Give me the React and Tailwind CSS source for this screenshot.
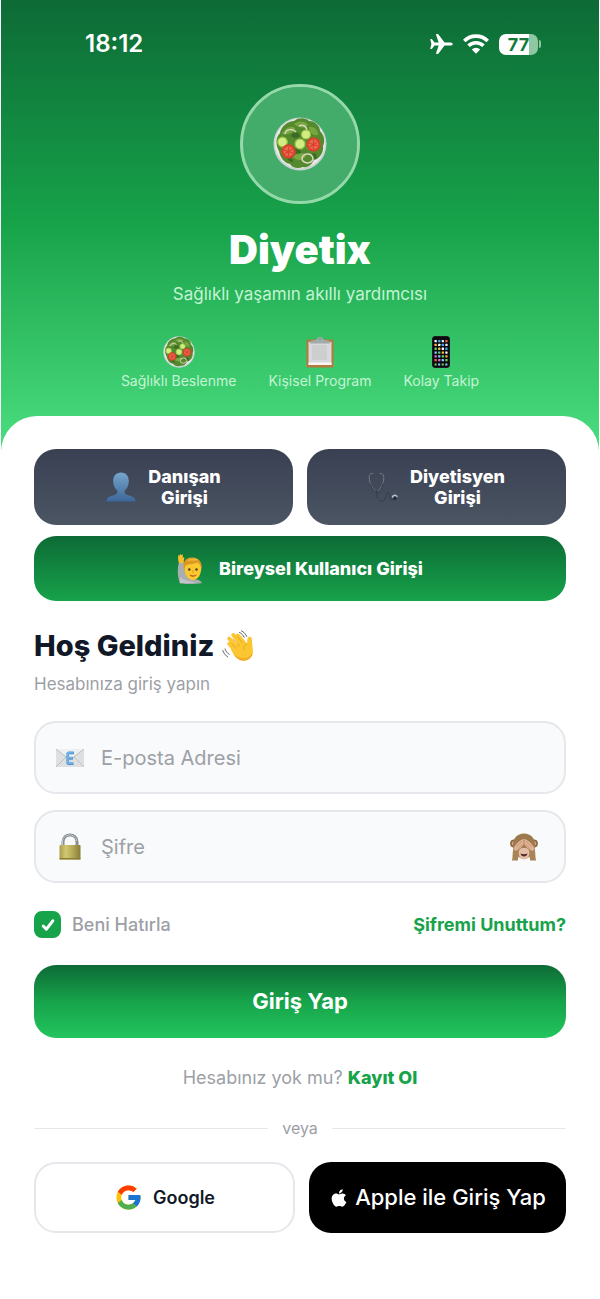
import React, { useState } from 'react';
import { FcGoogle } from 'react-icons/fc';
import { FaApple } from 'react-icons/fa';

const AirplaneIcon = () => (
  <svg viewBox="0 0 23 20" className="w-[23px] h-5" fill="#fff" aria-hidden="true">
    <path d="M22.800 10c0 .9-1.400 1.600-3 1.600h-5.300L8.700 19.300c-.3.400-.7.600-1.200.6h-.9c-.5 0-.7-.4-.5-.9l2.600-7.400H4.500L2 14.700c-.2.300-.5.400-.8.400H.8c-.4 0-.6-.3-.5-.7L1.400 10 .3 5.600c-.1-.4.1-.7.5-.7h.4c.3 0 .6.100.8.400l2.500 3.100h4.200L6.100 1c-.2-.5 0-.9.5-.9h.9c.5 0 .9.200 1.200.6l5.800 7.700h5.300c1.600 0 3 .7 3 1.600z" />
  </svg>
);

const WifiIcon = () => (
  <svg viewBox="0 0 26 20" className="w-[26px] h-5" fill="none" stroke="#fff" strokeWidth="3.600" aria-hidden="true">
    <path d="M1.300 7a16.500 16.500 0 0 1 23.400 0" />
    <path d="M5.500 11.800a10.600 10.600 0 0 1 15 0" />
    <path d="M13 19.800 8.800 15.500a6 6 0 0 1 8.400 0z" fill="#fff" stroke="none" />
  </svg>
);

const SaladIcon = ({ className }) => (
  <svg viewBox="0 0 54 54" className={className} aria-hidden="true">
    <circle cx="27" cy="27" r="26.5" fill="#c9d3d0" />
    <circle cx="27" cy="26.5" r="25" fill="#e6ebe9" />
    <path
      d="M6 34c-4-7-3-14 1-18 1-7 8-12 14-12 5-4 12-3 15 0 6 0 11 5 11 10 5 5 5 11 3 15 1 7-4 13-9 14-3 6-7 8-11 7-5 2-11 1-13-3-6-1-10-7-11-13z"
      fill="#55892d"
    />
    <g fill="#78a742">
      <path d="M9 17c3-6 9-9 13-6-1 5-6 7-13 6z" />
      <path d="M21 7c5-4 12-3 14 1-4 4-10 3-14-1z" />
      <path d="M36 10c5-1 9 3 9 8-5 1-9-3-9-8z" />
      <path d="M20 40c4-5 11-5 13-1-3 5-9 5-13 1z" />
      <path d="M33 30c4-3 9-3 12 1-3 4-9 4-12-1z" />
      <path d="M8 29c4-3 8-2 10 2-4 3-8 2-10-2z" />
    </g>
    <g fill="#3b6b24">
      <path d="M18 18c4-4 8-3 9 1-3 3-7 3-9-1z" />
      <path d="M20 32c4-2 8 0 8 4-4 2-7 0-8-4z" />
      <path d="M40 36c3 0 5 3 3 6-3 0-5-3-3-6z" />
      <path d="M14 40c3 0 6 2 6 5-3 0-6-2-6-5z" />
    </g>
    <g fill="none" stroke="#ddd6bd" strokeWidth="1.500">
      <path d="M12 17c1-5 8-6 11-2" />
      <path d="M26 9c4-2 7 0 8 4" />
      <ellipse cx="34.500" cy="41.500" rx="5.500" ry="4.500" />
    </g>
    <g fill="#d3ec82" stroke="#94c447" strokeWidth="1.200">
      <circle cx="9.500" cy="25" r="4.800" />
      <circle cx="27" cy="27" r="5" />
      <circle cx="33" cy="17.500" r="4.500" />
    </g>
    <g fill="#d8402c">
      <circle cx="15.500" cy="34.500" r="7.200" />
      <circle cx="40.500" cy="27.500" r="7.200" />
    </g>
    <g fill="#ea6a4d">
      <circle cx="15.500" cy="34.500" r="5" />
      <circle cx="40.500" cy="27.500" r="5" />
    </g>
    <g fill="none" stroke="#d8402c" strokeWidth="1.200">
      <path d="M15.500 30v9M11 33l9 3M19.500 32l-8 5" />
      <path d="M40.500 23v9M36 26l9 3M44.500 25l-8 5" />
    </g>
  </svg>
);

const ClipboardIcon = () => (
  <svg viewBox="0 0 32 32" className="w-8 h-8" aria-hidden="true">
    <rect x="2.500" y="3.500" width="27" height="28" rx="1.500" fill="#b9783b" />
    <path d="M4.500 6h23v23h-23z" fill="#d8d9da" />
    <path d="M4.500 26.500h23V29h-23z" fill="#f8f8f8" />
    <path d="M8 9h15v15H8z" fill="#ccced0" />
    <path d="M6 7.500V5.200c2-1 5-.8 6.500-1.700C13.500 1.500 14.500.8 16 .8s2.500.7 3.500 2.700c1.500.9 4.500.7 6.500 1.700v2.300z" fill="#a3aaad" />
    <circle cx="16" cy="3" r="1" fill="#50bd6d" />
  </svg>
);

const appColors = ['#fff', '#7fd0ff', '#e9e9e9', '#f6b73c', '#e46ad0', '#3ea7f4', '#66d06a', '#f06350'];

const PhoneIcon = () => (
  <svg viewBox="0 0 18 32" className="w-[18px] h-8" aria-hidden="true">
    <rect x="0.500" y="0.500" width="17" height="31" rx="2.500" fill="#0b0b0f" stroke="#1d1a20" />
    {[0, 1, 2, 3, 4, 5].map((row) =>
      [0, 1, 2, 3].map((col) => (
        <rect
          key={`${row}-${col}`}
          x={2.5 + col * 3.6}
          y={4 + row * 3.8}
          width="2.300"
          height="2.300"
          rx="0.400"
          fill={appColors[(row * 3 + col * 5) % 8]}
        />
      ))
    )}
    <path d="M2.500 27.500h2.100v2.100H2.500zM9.700 27.500h2.100v2.100H9.700z" fill="#66d06a" />
    <path d="M6.100 27.500h2.100v2.100H6.100zM13.300 27.500h2.100v2.100h-2.100z" fill="#7fd0ff" />
  </svg>
);

const PersonIcon = () => (
  <svg viewBox="0 0 30 30" className="w-[30px] h-[30px]" aria-hidden="true">
    <defs>
      <linearGradient id="person" x1="0" y1="0" x2="0" y2="1">
        <stop offset="0" stopColor="#76a5cc" />
        <stop offset="1" stopColor="#3c6799" />
      </linearGradient>
    </defs>
    <path
      d="M15 .5c5 0 7.800 3.500 7.800 8.500 0 4-1.500 7.500-4 9.500-.6 2.500.2 3.800 2.700 4.500 4.500 1.200 8 2 8 6.500H.5c0-4.500 3.500-5.300 8-6.500 2.500-.7 3.300-2 2.700-4.500-2.500-2-4-5.500-4-9.500C7.200 4 10 .5 15 .5z"
      fill="url(#person)"
    />
  </svg>
);

const StethoscopeIcon = () => (
  <svg viewBox="0 0 30 30" className="w-[30px] h-[30px]" fill="none" strokeLinecap="round" aria-hidden="true">
    <path d="M5 1.500C2 1 1 3 1.200 6c.2 6 3 9 6 13M12 1.500c3-.3 4 1.500 3.800 4.500-.2 6-2.500 9-5.500 13" stroke="#727984" strokeWidth="1" />
    <path d="M2.500 12c1 4 3 6 5 8h3c2-2 3.500-4 4.500-8M9 20c-1 5 1 9 5 9 5 0 3-8 6-8s1 7 4 7c2 0 3-1.500 3-3" stroke="#353d4b" strokeWidth="1" />
    <path d="M24.500 25a2.400 2.400 0 0 1 4.500-.5" stroke="#b9bfc6" strokeWidth="1.500" />
    <circle cx="27" cy="26.500" r="1.500" fill="#222a35" />
  </svg>
);

const RaisedHandIcon = () => (
  <svg viewBox="0 0 26 30" className="w-[26px] h-[30px]" aria-hidden="true">
    <path d="M2 8h5c-.5 7 1 12 4.500 15.500 5 2.200 12 1.500 13.500 5.500-5 1-17 1.300-22 .5C0 22 .5 14 2 8z" fill="#a9adb0" />
    <path d="M3 23c4 4 11 4 16 6H3z" fill="#c3c6c8" />
    <path d="M2 9C1 6.500 1 3 1.300 1.500c.6-.8 1.200-.3 1.400.7L3 .6c.6-.9 1.400-.3 1.400.6l.7-.5c.7-.3 1 .2.8 1L5.700 4c.6-1 1.800-.8 1.600 0C6.900 6 6.800 7.500 6.500 9z" fill="#f6bf2b" />
    <path d="M15.500 4.500c6 0 9.300 3.800 8.800 9.500-.2 7-3.500 12-8.300 12s-8.500-5-8.800-12c-.4-5.700 2.300-9.500 8.300-9.500z" fill="#fbc92f" />
    <path d="M7 15C5.500 9 8 3.500 14.500 3.500c6.500-.5 11 4 9.800 11-1-3.500-2.200-5-4-6-4 2-8.500 1.500-11 2.500-1 1-1.300 2.500-2.300 4z" fill="#dd9821" />
    <path d="M10 7c3-3 8-3 11-1-3 1-7 0-11 1z" fill="#f5bd3d" />
    <circle cx="12.300" cy="15.500" r="1.200" fill="#53341c" />
    <circle cx="19.500" cy="15.500" r="1.200" fill="#53341c" />
    <path d="M16 16v3" stroke="#d99a20" strokeWidth="1" />
    <path d="M12.500 20.500c2 1.200 5 1.200 7 0-.6 2.800-6 3-7 0z" fill="#a84a20" />
  </svg>
);

const WaveIcon = () => (
  <svg viewBox="0 0 32 32" className="w-8 h-8" strokeLinecap="round" aria-hidden="true">
    <g fill="none" stroke="#fbc62f" strokeWidth="4">
      <path d="m7.300 13.800 8 8.500" />
      <path d="m7.200 8.500 10 11" />
      <path d="m11.300 5 10 12" />
      <path d="m15.800 5.500 8 9.500" />
    </g>
    <path
      d="M8.500 18.500 20 10l3.500 2.800c1 .8 1.700.2 1.700-1 0-2.400.4-5.200 2.800-5 2.300.2 2 3.100 2.100 6 .2 3.400 1 5.600.7 9.200-.4 5.400-5 8.800-10 8.500-4-.3-6.800-3-9.300-6.200z"
      fill="#fbc62f"
    />
    <path d="m9.500 13.300 4.500 4.800M11.200 9l6 7M15.500 6.800l5 6M24.500 14c-2 1-3.200 2.800-2.800 5.500" fill="none" stroke="#e5a528" strokeWidth="0.900" />
    <path d="M11.500 24.500c2.500 3.200 5.300 6 9.300 6.300 5 .3 9.600-3.100 10-8.300-2.500 4.500-6.400 6.300-10.500 5.600-3.500-.6-6.400-2-8.800-3.600z" fill="#eeae28" />
    <path d="M19.500.8c2.300 1.200 4.200 3.200 5.200 5.600M17.500 2.500c2.200 1 3.700 2.700 4.700 4.800M.8 20.500c.8 2.700 2.600 5 5 6.500M3 19c.7 2.100 2.100 4 4.200 5.400" fill="none" stroke="#63666a" strokeWidth="1" />
  </svg>
);

const MailIcon = () => (
  <svg viewBox="0 0 28 18" className="w-7 h-[18px]" aria-hidden="true">
    <path d="M0 0h28v18H0z" fill="#dedfe1" />
    <path d="M0 18 10 8M28 18 18 8M0 0l14 11L28 0" fill="none" stroke="#b9bbbe" strokeWidth="0.900" />
    <path d="M.8 0h26.400L14 10z" fill="#eeeff0" />
    <path d="M12 4h6M12 9.300h5M11.500 14.800H17.500M11.800 4v11" fill="none" stroke="#4584c0" strokeWidth="2.600" />
    <path d="M12 3.500h5.500M12 8.800h4.500M11.500 14.200H17M11.800 3v11" fill="none" stroke="#6eb2ec" strokeWidth="2" />
  </svg>
);

const LockIcon = () => (
  <svg viewBox="0 0 22 27" className="w-[22px] h-[27px]" aria-hidden="true">
    <defs>
      <linearGradient id="brass" x1="0" x2="1">
        <stop offset="0" stopColor="#a99d4b" />
        <stop offset="0.300" stopColor="#d1c773" />
        <stop offset="0.600" stopColor="#b8ab59" />
        <stop offset="1" stopColor="#887b38" />
      </linearGradient>
    </defs>
    <path d="M4 13V9c0-9.500 14-9.500 14 0v4" fill="none" stroke="#858c92" strokeWidth="3" />
    <path d="M3.500 13V9C3.500-.2 17.500-.2 17.500 8" fill="none" stroke="#c5cbd0" strokeWidth="1" />
    <rect x="0.500" y="12" width="21" height="14.500" rx="1" fill="url(#brass)" />
    <path d="M.5 25h21v1.500H.5z" fill="#8d7e36" />
  </svg>
);

const MonkeyIcon = () => (
  <svg viewBox="0 0 28 28" className="w-7 h-7" aria-hidden="true">
    <circle cx="4" cy="10.500" r="3.900" fill="#8b6840" />
    <circle cx="24" cy="10.500" r="3.900" fill="#8b6840" />
    <circle cx="4" cy="10.500" r="2.200" fill="#dfa494" />
    <circle cx="24" cy="10.500" r="2.200" fill="#dfa494" />
    <path d="M14 .6c7 0 11 5 11 11.400 0 7-5 14-11 14S3 19 3 12C3 5.600 7 .6 14 .6z" fill="#9d7a4d" />
    <path d="M9 17c2-3 8-3 10 0 1.500 5-1 9.500-5 9.500S7.500 22 9 17z" fill="#e3bfa8" />
    <path d="M10.500 20.500c2.500 1 4.500 1 7 0-.5 4-6.500 4-7 0z" fill="#552b25" />
    <path d="M2 27.500c1-4 .3-9 1.500-12 1-3 4-7 9-9.300 1.500-.5 1.700 1 .8 1.800L13 9.500c1 1 .5 2.700-.5 3.800C10 16 7.500 17.500 8 21c.2 2.500.3 4.500-.2 6.500z" fill="#a98455" />
    <path d="M26 27.500c-1-4-.3-9-1.500-12-1-3-4-7-9-9.300-1.500-.5-1.700 1-.8 1.800l.3 1.500c-1 1-.5 2.700.5 3.800 2.500 2.700 5 4.200 4.500 7.700-.2 2.500-.3 4.500.2 6.500z" fill="#a98455" />
    <path d="M4 14.500c2-4 5.500-7 9-8.500.8-.2 1.200.8.500 1.500.8 1.800.5 4-1 5.500-2 2.500-5 4-7 5-1.500-1-1.800-2.500-1.500-3.500z" fill="#e0b295" />
    <path d="M24 14.500c-2-4-5.500-7-9-8.500-.8-.2-1.200.8-.5 1.500-.8 1.800-.5 4 1 5.500 2 2.500 5 4 7 5 1.500-1 1.800-2.500 1.500-3.500z" fill="#e0b295" />
    <path d="m6.500 13.500 5.500-5M8 15.500l4.500-4M21.500 13.500l-5.500-5M20 15.500l-4.500-4M14 7.500v5" stroke="#bd8870" strokeWidth="0.700" />
  </svg>
);

const features = [
  { icon: <SaladIcon className="w-8 h-8" />, label: 'Sağlıklı Beslenme' },
  { icon: <ClipboardIcon />, label: 'Kişisel Program' },
  { icon: <PhoneIcon />, label: 'Kolay Takip' }
];

const StatusBar = () => (
  <div className="w-full flex items-center justify-between pl-[84px] pr-[58px] pt-7">
    <span className="text-2xl leading-8 font-semibold">18:12</span>
    <div className="flex items-center gap-2.5">
      <AirplaneIcon />
      <WifiIcon />
      <div className="flex items-center gap-px">
        <div className="w-[39px] h-[21px] rounded-[7px] bg-linear-to-r from-white from-76% to-[#8fc7a0] to-76% text-[#137a3c] text-lg leading-[21px] font-bold text-center">
          77
        </div>
        <div className="w-0.5 h-2 rounded-r-full bg-[#8fc7a0]" />
      </div>
    </div>
  </div>
);

const App = () => {
  const [email, setEmail] = useState('');
  const [password, setPassword] = useState('');
  const [showPassword, setShowPassword] = useState(false);
  const [remember, setRemember] = useState(true);

  return (
    <div className="min-h-screen bg-white px-px font-[Inter,sans-serif]">
      <header className="flex flex-col items-center pb-[60px] text-white bg-linear-to-b from-[#0d6b36] via-[#17a34a] to-[#4ade80]">
        <StatusBar />
        <div className="mt-6 w-[120px] h-[120px] rounded-full border-3 border-[#95d9ab] bg-[#44ac6a] bg-clip-padding flex items-center justify-center">
          <SaladIcon className="w-[54px] h-[54px]" />
        </div>
        <h1 className="mt-5 text-[40px] leading-[52px] font-black">Diyetix</h1>
        <p className="mt-1.5 text-[17px] leading-6 text-[#c5f3d4]">Sağlıklı yaşamın akıllı yardımcısı</p>
        <ul className="mt-[30px] flex gap-8">
          {features.map((feature) => (
            <li key={feature.label} className="flex flex-col items-center gap-1">
              {feature.icon}
              <span className="text-sm leading-[18px] text-[#c5f3d4]">{feature.label}</span>
            </li>
          ))}
        </ul>
      </header>

      <main className="relative -mt-[34px] rounded-t-[36px] bg-white px-[33px] pt-[33px] pb-16">
        {/* Login type */}
        <div className="grid grid-cols-2 gap-x-3.5 gap-y-[11px] text-lg leading-[21px] font-extrabold text-white">
          <button type="button" className="h-[76px] rounded-[22px] bg-linear-to-b from-[#394052] to-[#4b5563] flex items-center justify-center gap-3">
            <PersonIcon />
            <span>Danışan<br />Girişi</span>
          </button>
          <button type="button" className="h-[76px] rounded-[22px] bg-linear-to-b from-[#394052] to-[#4b5563] flex items-center justify-center gap-3">
            <StethoscopeIcon />
            <span>Diyetisyen<br />Girişi</span>
          </button>
          <button type="button" className="col-span-2 h-[65px] rounded-[22px] bg-linear-to-b from-[#0d6b36] to-[#17a34a] flex items-center justify-center gap-4">
            <RaisedHandIcon />
            <span>Bireysel Kullanıcı Girişi</span>
          </button>
        </div>

        <h2 className="mt-[27px] flex items-center gap-2 text-[29px] leading-9 font-extrabold text-[#111827]">
          Hoş Geldiniz
          <WaveIcon />
        </h2>
        <p className="mt-2 text-[17px] leading-6 text-[#9ca0a6]">Hesabınıza giriş yapın</p>

        <form onSubmit={(e) => e.preventDefault()}>
          <div className="mt-[25px] h-[73px] px-5 rounded-[22px] border-2 border-[#e5e7eb] bg-[#f9fafb] flex items-center">
            <label htmlFor="email" className="w-7 mr-[17px] flex justify-center"><MailIcon /></label>
            <input
              id="email"
              type="email"
              aria-label="E-posta Adresi"
              placeholder="E-posta Adresi"
              value={email}
              onChange={(e) => setEmail(e.target.value)}
              className="flex-1 min-w-0 text-xl text-[#111827] placeholder:text-[#9ca0a6] outline-none"
            />
          </div>
          <div className="mt-4 h-[73px] px-5 rounded-[22px] border-2 border-[#e5e7eb] bg-[#f9fafb] flex items-center">
            <label htmlFor="password" className="w-7 mr-[17px] flex justify-center"><LockIcon /></label>
            <input
              id="password"
              type={showPassword ? 'text' : 'password'}
              aria-label="Şifre"
              placeholder="Şifre"
              value={password}
              onChange={(e) => setPassword(e.target.value)}
              className="flex-1 min-w-0 text-xl text-[#111827] placeholder:text-[#9ca0a6] outline-none"
            />
            <button type="button" aria-label="Şifreyi göster" onClick={() => setShowPassword(!showPassword)} className="mr-1.5">
              <MonkeyIcon />
            </button>
          </div>

          <div className="mt-7 flex items-center justify-between text-lg leading-[27px]">
            <label className="flex items-center gap-[11px] font-medium text-[#9ca0a6]">
              <span className="grid place-items-center">
                <input
                  type="checkbox"
                  checked={remember}
                  onChange={(e) => setRemember(e.target.checked)}
                  className="col-start-1 row-start-1 appearance-none w-[27px] h-[27px] rounded-lg border-2 border-[#17a34a] checked:bg-[#17a34a]"
                />
                {remember && (
                  <svg viewBox="0 0 14 14" className="col-start-1 row-start-1 w-3.5 h-3.5 pointer-events-none" aria-hidden="true">
                    <path d="m2.200 8 3.200 3.200L11.800 2.800" fill="none" stroke="#fff" strokeWidth="3" strokeLinecap="round" strokeLinejoin="round" />
                  </svg>
                )}
              </span>
              Beni Hatırla
            </label>
            <a href="#forgot" className="font-bold text-[#17a34a]">Şifremi Unuttum?</a>
          </div>

          <button type="submit" className="mt-[27px] w-full h-[73px] rounded-[22px] bg-linear-to-b from-[#0d6b36] via-[#17a34a] to-[#22c55e] text-[22px] font-bold text-white">
            Giriş Yap
          </button>
        </form>

        <p className="mt-[26px] text-center text-lg leading-[27px] text-[#9ca0a6]">
          Hesabınız yok mu? <a href="#register" className="font-extrabold text-[#17a34a]">Kayıt Ol</a>
        </p>

        <div className="mt-[25px] flex items-center gap-3.5 text-base leading-6 text-[#9ca0a6]">
          <div className="flex-1 h-px bg-[#e5e7eb]" />
          veya
          <div className="flex-1 h-px bg-[#e5e7eb]" />
        </div>

        <div className="mt-[22px] grid grid-cols-[261fr_257fr] gap-3.5">
          <button type="button" className="h-[71px] rounded-[22px] border-2 border-[#e5e7eb] bg-white flex items-center justify-center gap-2.5 text-lg font-semibold text-[#111827]">
            <FcGoogle className="w-[29px] h-[29px]" />
            Google
          </button>
          <button type="button" className="h-[71px] rounded-[22px] bg-black flex items-center justify-center gap-1.5 text-[22px] font-medium text-white whitespace-nowrap">
            <FaApple className="w-5 h-5" />
            Apple ile Giriş Yap
          </button>
        </div>
      </main>
    </div>
  );
};

export default App;
